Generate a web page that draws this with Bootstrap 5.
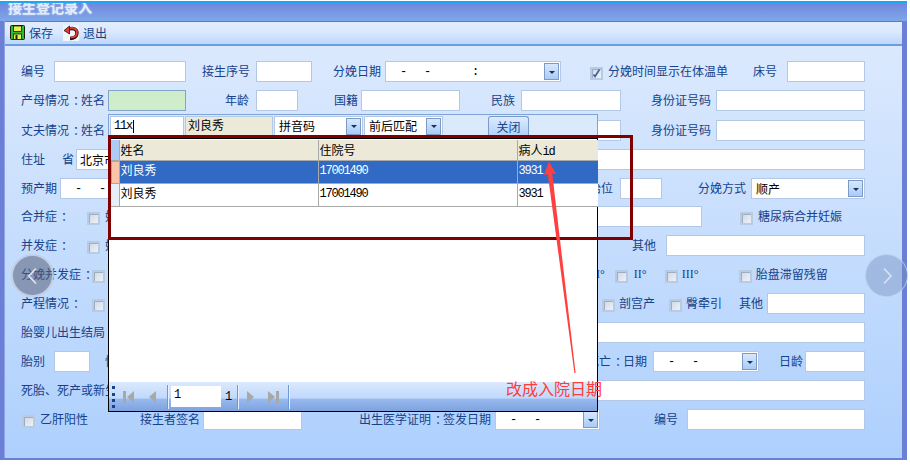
<!DOCTYPE html>
<html lang="zh">
<head>
<meta charset="utf-8">
<title>接生登记录入</title>
<link href="https://cdn.jsdelivr.net/npm/bootstrap@5.3.0/dist/css/bootstrap.min.css" rel="stylesheet">
<style>
html,body{margin:0;background:#fff;overflow:hidden}
body{font:12px/14px "Noto Sans CJK SC","Liberation Sans",sans-serif;color:#15428b}
.stage{position:relative;width:910px;height:466px;padding-top:1px;overflow:hidden}
.appwin{width:907px;height:459px;border-top:2px solid #1aa8f5;background:#6b7fd6}
.titlebar{height:18px;overflow:hidden;background:linear-gradient(#6f87dc,#7fa8e9);padding-left:8px;color:#e4ecfb;font-size:14px;font-weight:700;line-height:14px;text-shadow:0 0 2px #c8d8f6}
.titlebar span{display:block;margin-top:-3px}
.inner{margin:0 5px 4px 4px;height:437px;border-left:1px solid #8ea2e6}
.tools{height:25px;border-top:1px solid #6b7a9c;border-bottom:2px solid #6c9de2;background:linear-gradient(#e2eeff,#dbe9fe 45%,#bcd6fb);padding:0 0 1px 5px;gap:4px}
.tools svg{flex-shrink:0}
.tbtn{display:flex;align-items:center;gap:4px;margin-right:6px}
.formbody{height:412px;background:linear-gradient(#dbe9fd,#aed0fd);padding:15px 0 0 16px;gap:8px}
.frow{height:21px;flex-shrink:0}
.frow>span{white-space:nowrap;flex-shrink:0;padding-bottom:1px}
.colon{display:inline-block;width:12px;padding-left:4px;font-weight:400;font-feature-settings:"halt"}
.tp1{margin-top:1px}.tn1{margin-top:-1px}
.fld{display:block;height:21px;min-height:0;flex-shrink:0;padding:0 3px;border:1px solid #b2c8e6;border-radius:0;background:#fff;font:inherit;color:#000}
.fld:focus{box-shadow:none}
.fld-green{background:#cfeccb;border-color:#83a5c5}
.fld-tan{background:#ece9d8;padding:1px 2px 0}
.combo{display:flex;align-items:center;justify-content:space-between;height:21px;flex-shrink:0;border:1px solid #b2c8e6;background:#fff;color:#000;padding:0 1px 0 4px;white-space:pre}
.dash,.mono{font:12px/14px "Liberation Mono",monospace;letter-spacing:-1.2px}
.dash{padding-left:10px}
.drop{width:15px;height:17px;flex-shrink:0;border:1px solid #7d99c6;background:linear-gradient(#d8e8fd,#a9cbf7);display:flex;align-items:center;justify-content:center}
.drop::after{content:"";margin-top:1px;border:3px solid transparent;border-top:3px solid #15325f;border-bottom:0}
.cb{width:13px;height:13px;flex-shrink:0;margin-top:3px;border:2px solid #b9cbe3;background:linear-gradient(135deg,#cfd8e4,#eef2f7);box-shadow:inset 1px 1px 0 #9fadc0;display:flex;align-items:center;justify-content:center}
.roman{font-family:"Liberation Serif",serif}
.g1{margin-left:1px}.g2{margin-left:2px}.g3{margin-left:3px}.g4{margin-left:4px}.g5{margin-left:5px}.g6{margin-left:6px}.g7{margin-left:7px}.g8{margin-left:8px}.g9{margin-left:9px}.g10{margin-left:10px}.g11{margin-left:11px}.g13{margin-left:13px}.g14{margin-left:14px}.g15{margin-left:15px}.g16{margin-left:16px}.g17{margin-left:17px}.g18{margin-left:18px}.g20{margin-left:20px}.g21{margin-left:21px}.g25{margin-left:25px}.g29{margin-left:29px}.g30{margin-left:30px}.g31{margin-left:31px}.g36{margin-left:36px}.g38{margin-left:38px}.g39{margin-left:39px}.g40{margin-left:40px}.g52{margin-left:52px}.g54{margin-left:54px}.g57{margin-left:57px}.g183{margin-left:183px}.g335{margin-left:335px}.g371{margin-left:371px}.g429{margin-left:429px}.g458{margin-left:458px}.g491{margin-left:491px}.g497{margin-left:497px}.g503{margin-left:503px}.gn1{margin-left:-1px}
.w18{width:18px}.w17{width:17px}.w36{width:36px}.w42{width:42px}.w56{width:56px}.w60{width:60px}.w78{width:78px}.w98{width:98px}.w99{width:99px}.w100{width:100px}.w105{width:105px}.w106{width:106px}.w114{width:114px}.w132{width:132px}.w149{width:149px}.w176{width:176px}.w178{width:178px}.w199{width:199px}.w202{width:202px}.w565{width:565px}.w757{width:757px}.w789{width:789px}
.popup{position:absolute;left:108px;top:114px;width:490px;height:298px;display:flex;flex-direction:column}
.popbar{height:24px;flex-shrink:0;background:#dbe9fd;border:1px solid #7ea3d9;border-bottom:0;padding:1px 0 0 1px}
.popbar .fld,.popbar .combo{height:20px}
.w74{width:74px}.w88{width:88px}.w79{width:79px}.w89{width:89px}
.gap1{margin-left:1px}
.caretbar{width:1px;height:13px;background:#000;margin-left:1px}
.closebtn{width:41px;height:21px;margin-left:45px;padding:0;border:1px solid #7a9bcb;border-bottom:0;border-radius:3px 3px 0 0;background:linear-gradient(#dcebfe,#aecff9);color:#15428b;font:inherit}
.gridwrap{flex:1;min-height:0;border:1px solid #000;background:#fff;padding:1px 0 0 2px}
.dgrid{width:487px;table-layout:fixed;color:#000;margin:0;--bs-table-bg:transparent}
.dgrid th,.dgrid td{padding:2px 0 0 1px;font-weight:400;border:0;border-right:1px solid #a9a9a9;border-bottom:1px solid #a9a9a9;line-height:16px;background:#fff;color:#000;box-shadow:none;vertical-align:top}
.dgrid thead th{height:20px;background:#ece9d8}
.dgrid tbody td,.dgrid tbody th{height:23px;padding-top:1px}
.dgrid th:last-child,.dgrid td:last-child{border-right:0}
.dgrid .rh{padding:0;width:8px;background:#e8eef6;border-right-color:#a9a9a9}
.dgrid thead .rh{background:#aecbf5}
.dgrid .rh-cur{background:#f9c4a8;box-shadow:inset 1px 1px 0 #ee8f6c}
.dgrid .sel td{background:#316ac5;color:#fff}
.dgrid tbody .mono{font:12px/16px "Liberation Mono",monospace;letter-spacing:-1.2px;padding-top:2px}
.c1{width:199px}.c2{width:199px}
.pager{height:29px;flex-shrink:0;margin-left:-2px;background:linear-gradient(#dbe9fd,#c0d9fc 55%,#97b9ee 60%,#7da2de);padding-left:3px;color:#000}
.grip{width:3px;height:22px;border-left:3px dotted #15428b;margin-right:8px}
.psep{width:1px;height:24px;background:#6c97d8;box-shadow:1px 0 0 #e8f1ff}
.pnum{width:50px;height:21px;margin:0 0 0 3px;background:#fff;padding:0 3px;border:0;font:12px/19px "Liberation Mono",monospace}
.ptxt{font:12px/14px "Liberation Mono",monospace;letter-spacing:-1.2px;margin:0 6px 0 4px}
.navi{position:absolute;border-radius:50%;padding:0;width:43px;height:43px;top:254px;display:flex;align-items:center;justify-content:center}
.navi-l{left:11px;background:rgba(85,95,120,.55);border:2px solid rgba(214,224,240,.75)}
.navi-r{left:865px;background:rgba(120,145,190,.45);border:1px solid rgba(205,220,245,.6)}
.redbox{position:absolute;left:108px;top:135px;width:525px;height:105px;border:3px solid #800000}
.overlay{position:absolute;left:0;top:0;pointer-events:none}
.note{position:absolute;left:506px;top:379px;font-size:16px;line-height:18px;color:#ff3c3c;white-space:nowrap}
</style>
</head>
<body>
<div class="stage">
  <div class="appwin">
    <div class="titlebar"><span>接生登记录入</span></div>
    <div class="inner">
      <div class="tools d-flex align-items-center">
        <div class="tbtn">
          <svg width="15" height="15" viewBox="0 0 15 15"><rect x=".5" y=".5" width="14" height="14" rx="1" fill="#35b53a" stroke="#10240f"/><rect x="3.500" y="1" width="8" height="5.500" fill="#e9f04a" stroke="#10240f" stroke-width=".8"/><rect x="3.500" y="9" width="8" height="5.500" fill="#e9f04a" stroke="#10240f" stroke-width=".8"/><rect x="5.500" y="10" width="2" height="4" fill="#10240f"/></svg>
          <span>保存</span>
        </div>
        <div class="tbtn">
          <svg width="16" height="16" viewBox="0 0 16 16"><rect width="16" height="16" fill="#f2f5fb"/><path d="M6 4c4-1.500 8 .3 8 4 0 3.500-3 5.500-7 5.500" fill="none" stroke="#16161c" stroke-width="3.400"/><path d="M6 3.500c4-1.500 8 .3 8 4 0 3.500-3 5-6.500 5" fill="none" stroke="#e8392c" stroke-width="1.900"/><path d="M1 5.500L6.500 1v8z" fill="#e8392c" stroke="#16161c" stroke-width=".8"/></svg>
          <span>退出</span>
        </div>
      </div>
      <div class="formbody d-flex flex-column">
        <div class="frow d-flex align-items-center">
          <span>编号</span><input class="form-control fld w132 g9"><span class="g16">接生序号</span><input class="form-control fld w56 g6"><span class="g21">分娩日期</span>
          <div class="combo w176 g4"><span class="dash">-   -       :</span><i class="drop"></i></div>
          <div class="cb g29 d-flex"><svg width="9" height="9" viewBox="0 0 9 9"><path d="M1.500 5.500l1.500 2L7.500 .5" fill="none" stroke="#3e5f9f" stroke-width="1.600"/></svg></div>
          <span class="g5">分娩时间显示在体温单</span><span class="g25">床号</span><input class="form-control fld w78 g10">
        </div>
        <div class="frow d-flex align-items-center">
          <span>产母情况<b class="colon">：</b>姓名</span><input class="form-control fld fld-green w78 g3"><span class="g39">年龄</span><input class="form-control fld w42 g7"><span class="g36">国籍</span><input class="form-control fld w99 g3"><span class="g31">民族</span><input class="form-control fld w100 g6"><span class="g30">身份证号码</span><input class="form-control fld w149 g5">
        </div>
        <div class="frow tp1 d-flex align-items-center">
          <span>丈夫情况<b class="colon">：</b>姓名</span><input class="form-control fld w78 g3"><input class="form-control fld w100 g335"><span class="g30">身份证号码</span><input class="form-control fld w149 g5">
        </div>
        <div class="frow d-flex align-items-center">
          <span>住址</span><span class="g17">省</span><input class="form-control fld w789 g2" value="北京市">
        </div>
        <div class="frow d-flex align-items-center">
          <span>预产期</span><div class="combo w100 g3"><span class="dash">-   -</span></div><span class="g429">胎位</span><input class="form-control fld w42 g7"><span class="g36">分娩方式</span>
          <div class="combo w114 g5"><span>顺产</span><i class="drop"></i></div>
        </div>
        <div class="frow tn1 d-flex align-items-center">
          <span>合并症<b class="colon">：</b></span><i class="cb g18"></i><span class="g5">妊娠</span><input class="form-control fld w202 g371"><i class="cb g38"></i><span class="g5">糖尿病合并妊娠</span>
        </div>
        <div class="frow d-flex align-items-center">
          <span>并发症<b class="colon">：</b></span><i class="cb g18"></i><span class="g5">妊娠</span><span class="g503">其他</span><input class="form-control fld w199 g10">
        </div>
        <div class="frow d-flex align-items-center">
          <span>分娩并发症<b class="colon">：</b></span><i class="cb gn1"></i><span class="roman g491">I°</span><i class="cb g10"></i><span class="roman w18 g6">II°</span><i class="cb g13"></i><span class="roman w17 g4">III°</span><i class="cb g40"></i><span class="g4">胎盘滞留残留</span>
        </div>
        <div class="frow d-flex align-items-center">
          <span>产程情况<b class="colon">：</b></span><i class="cb g11"></i><i class="cb g497"></i><span class="g4">剖宫产</span><i class="cb g14"></i><span class="g4">臀牵引</span><span class="g17">其他</span><input class="form-control fld w98 g4">
        </div>
        <div class="frow d-flex align-items-center">
          <span>胎婴儿出生结局</span><input class="form-control fld w757 g3">
        </div>
        <div class="frow d-flex align-items-center">
          <span>胎别</span><input class="form-control fld w36 g9"><span class="g15">性别</span><span class="g458">死亡<b class="colon">：</b>日期</span>
          <div class="combo w106 g6"><span class="dash">-   -</span><i class="drop"></i></div>
          <span class="g20">日龄</span><input class="form-control fld w60 g2">
        </div>
        <div class="frow d-flex align-items-center">
          <span>死胎、死产或新生</span><input class="form-control fld w565 g183">
        </div>
        <div class="frow d-flex align-items-center">
          <i class="cb g1"></i><span class="g5">乙肝阳性</span><span class="g52">接生者签名</span><input class="form-control fld w99 g3"><span class="g57">出生医学证明<b class="colon">：</b>签发日期</span>
          <div class="combo w105 g4"><span class="dash">-   -</span><i class="drop"></i></div>
          <span class="g54">编号</span><input class="form-control fld w178 g9">
        </div>
      </div>
    </div>
  </div>

  <div class="popup">
    <div class="popbar d-flex align-items-start">
      <div class="fld w74 d-flex align-items-center"><span class="mono">11x</span><i class="caretbar"></i></div>
      <div class="fld fld-tan w88 gap1">刘良秀</div>
      <div class="combo w89 gap1"><span>拼音码</span><i class="drop"></i></div>
      <div class="combo w79 gap1"><span>前后匹配</span><i class="drop"></i></div>
      <button type="button" class="closebtn">关闭</button>
    </div>
    <div class="gridwrap d-flex flex-column">
      <table class="table dgrid">
        <thead><tr><th class="rh"></th><th class="c1">姓名</th><th class="c2">住院号</th><th>病人<span class="mono">id</span></th></tr></thead>
        <tbody>
          <tr class="sel"><th class="rh rh-cur"></th><td>刘良秀</td><td class="mono">17001490</td><td class="mono">3931</td></tr>
          <tr><th class="rh"></th><td>刘良秀</td><td class="mono">17001490</td><td class="mono">3931</td></tr>
        </tbody>
      </table>
      <div class="flex-grow-1"></div>
      <div class="pager d-flex align-items-center">
        <i class="grip"></i>
        <svg width="12" height="12" viewBox="0 0 12 12"><rect x="0" y="0" width="3" height="12" fill="#a8a8a8"/><path d="M11 0v12L4 6z" fill="#a8a8a8"/></svg>
        <svg class="g14" width="8" height="12" viewBox="0 0 8 12"><path d="M7 0v12L0 6z" fill="#a8a8a8"/></svg>
        <i class="psep g10"></i>
        <div class="pnum">1</div><span class="ptxt">1</span>
        <i class="psep"></i>
        <svg class="g8" width="8" height="12" viewBox="0 0 8 12"><path d="M1 0v12l7-6z" fill="#a8a8a8"/></svg>
        <svg class="g14" width="12" height="12" viewBox="0 0 12 12"><path d="M0 0v12l7-6z" fill="#a8a8a8"/><rect x="8" y="0" width="3" height="12" fill="#a8a8a8"/></svg>
        <i class="psep g8"></i>
      </div>
    </div>
  </div>

  <div class="redbox"></div>
  <svg class="overlay" width="910" height="466" viewBox="0 0 910 466">
    <path d="M549 161.500L556 174l-3.800-.8L575.600 373h-1.200L547.800 174.200l-3.800 .8z" fill="#ff4040"/>
  </svg>
  <div class="note">改成入院日期</div>

  <div class="navi navi-l"><svg width="12" height="18" viewBox="0 0 12 18"><path d="M9 1.500L2 9l7 7.500" fill="none" stroke="#dfe5ee" stroke-width="1.800"/></svg></div>
  <div class="navi navi-r"><svg width="12" height="18" viewBox="0 0 12 18"><path d="M3 1.500L10 9l-7 7.500" fill="none" stroke="#d5e0f2" stroke-width="1.800"/></svg></div>
</div>
<script src="https://cdn.jsdelivr.net/npm/bootstrap@5.3.0/dist/js/bootstrap.bundle.min.js"></script>
</body>
</html>
